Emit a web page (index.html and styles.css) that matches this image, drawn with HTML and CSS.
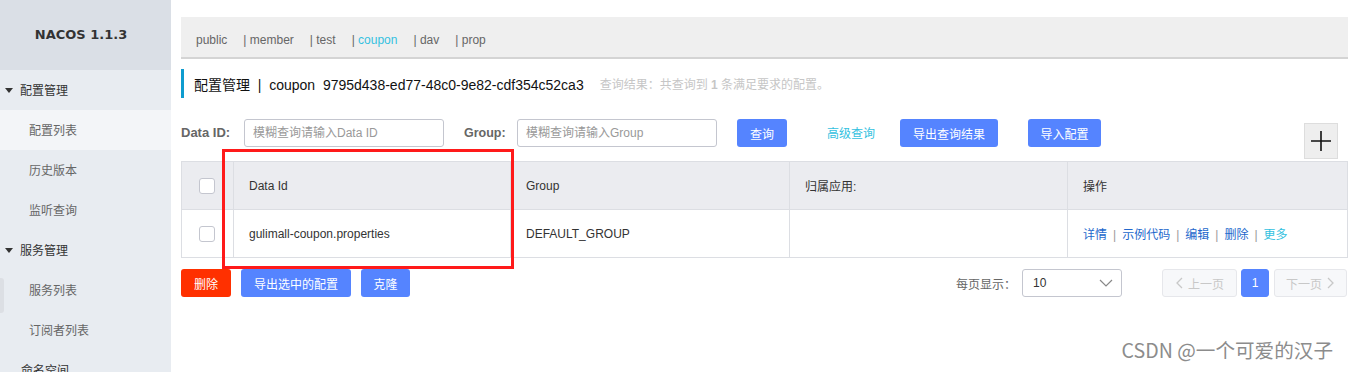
FILE: index.html
```html
<!DOCTYPE html>
<html>
<head>
<link rel="stylesheet" href="styles.css">
</head>
<body>
  <div class="app">
    <aside class="sidebar">
      <div class="logo">NACOS 1.1.3</div>
      <ul class="menu">
        <li class="menu-group"><span class="caret"></span>配置管理</li>
        <li class="menu-item active">配置列表</li>
        <li class="menu-item">历史版本</li>
        <li class="menu-item">监听查询</li>
        <li class="menu-group"><span class="caret"></span>服务管理</li>
        <li class="menu-item">服务列表</li>
        <li class="menu-item">订阅者列表</li>
        <li class="menu-group plain">命名空间</li>
      </ul>
      <span class="handle"></span>
    </aside>

    <main class="main">
      <div class="ns-bar">
        <span class="ns">public</span>
        <span class="ns">| member</span>
        <span class="ns">| test</span>
        <span class="ns">| <em>coupon</em></span>
        <span class="ns">| dav</span>
        <span class="ns">| prop</span>
      </div>

      <div class="page-title">
        <span class="title-text">配置管理 &nbsp;|&nbsp; coupon &nbsp;9795d438-ed77-48c0-9e82-cdf354c52ca3</span>
        <span class="result">查询结果：共查询到 <b>1</b> 条满足要求的配置。</span>
      </div>

      <div class="search">
        <label class="field-label id-label">Data ID:</label>
        <input class="field" type="text" placeholder="模糊查询请输入Data ID">
        <label class="field-label group-label">Group:</label>
        <input class="field" type="text" placeholder="模糊查询请输入Group">
        <button class="btn btn-query">查询</button>
        <a class="link-adv">高级查询</a>
        <button class="btn btn-export">导出查询结果</button>
        <button class="btn btn-import">导入配置</button>
        <button class="btn-add">
          <svg width="22" height="22" viewBox="0 0 22 22"><path d="M11 1v20M1 11h20" stroke="#111" stroke-width="1.6" fill="none"/></svg>
        </button>
      </div>

      <table class="grid">
        <colgroup>
          <col style="width:52px"><col style="width:277px"><col style="width:279px"><col style="width:278px"><col style="width:280px">
        </colgroup>
        <thead>
          <tr>
            <th class="check-cell"><span class="checkbox"></span></th>
            <th>Data Id</th>
            <th>Group</th>
            <th>归属应用:</th>
            <th>操作</th>
          </tr>
        </thead>
        <tbody>
          <tr>
            <td class="check-cell"><span class="checkbox"></span></td>
            <td>gulimall-coupon.properties</td>
            <td>DEFAULT_GROUP</td>
            <td></td>
            <td class="ops">
              <a>详情</a><i>|</i><a>示例代码</a><i>|</i><a>编辑</a><i>|</i><a>删除</a><i>|</i><a class="more">更多</a>
            </td>
          </tr>
        </tbody>
      </table>

      <div class="footer-row">
        <button class="btn btn-danger">删除</button>
        <button class="btn btn-sel">导出选中的配置</button>
        <button class="btn btn-clone">克隆</button>
        <div class="pager">
          <span class="page-size-label">每页显示：</span>
          <div class="select">
            <span>10</span>
            <svg width="14" height="8" viewBox="0 0 14 8"><path d="M1 1l6 6 6-6" stroke="#888" stroke-width="1.2" fill="none"/></svg>
          </div>
          <button class="page-btn prev">
            <svg width="8" height="12" viewBox="0 0 8 12"><path d="M7 1L2 6l5 5" stroke="#c8c8c8" stroke-width="1.3" fill="none"/></svg>上一页
          </button>
          <button class="page-btn current">1</button>
          <button class="page-btn next">下一页
            <svg width="8" height="12" viewBox="0 0 8 12"><path d="M1 1l5 5-5 5" stroke="#c8c8c8" stroke-width="1.3" fill="none"/></svg>
          </button>
        </div>
      </div>

      <div class="mark"></div>
    </main>

    <div class="watermark">CSDN @一个可爱的汉子</div>
  </div>
</body>
</html>
```

FILE: styles.css
```css
* {
  box-sizing: border-box;
  margin: 0;
  padding: 0;
}
body {
  width: 1348px;
  height: 372px;
  overflow: hidden;
  background: #fff;
  font-family: "Liberation Sans", "Noto Sans CJK SC", sans-serif;
  font-size: 12px;
  color: #333;
}
.app {
  display: flex;
  height: 372px;
  position: relative;
}

/* 左侧菜单 */
.sidebar {
  width: 171px;
  flex-shrink: 0;
  background: #e8ecf1;
  position: relative;
}
.logo {
  height: 70px;
  line-height: 70px;
  text-align: center;
  padding-right: 9px;
  background: #dadfe6;
  font-family: "DejaVu Sans", sans-serif;
  font-size: 13px;
  font-weight: bold;
  color: #333;
}
.menu {
  list-style: none;
}
.menu li {
  height: 40px;
  line-height: 40px;
  font-family: "Noto Sans CJK SC", sans-serif;
}
.menu-group {
  display: flex;
  align-items: center;
  color: #333;
  padding-left: 5px;
}
.menu-group.plain {
  padding-left: 21px;
}
.caret {
  width: 0;
  height: 0;
  border-left: 4.5px solid transparent;
  border-right: 4.5px solid transparent;
  border-top: 5px solid #333;
  margin-right: 7px;
}
.menu-item {
  padding-left: 29px;
  color: #666;
}
.menu-item.active {
  background: #f3f5f8;
}
.handle {
  position: absolute;
  left: 0;
  top: 278px;
  width: 4px;
  height: 35px;
  background: #dcdfe4;
  border-radius: 0 3px 3px 0;
}

/* 主区域 */
.main {
  flex: 1;
  padding: 17px 1px 0 10px;
  position: relative;
}
.ns-bar {
  height: 42px;
  margin-right: -1px;
  background: #efefef;
  border-bottom: 2px solid #d4d4d4;
  display: flex;
  align-items: center;
  padding-left: 15px;
  padding-top: 6px;
  color: #666;
}
.ns {
  margin-right: 16px;
}
.ns em {
  font-style: normal;
  color: #33c1e0;
}
.page-title {
  margin-top: 10px;
  height: 29px;
  border-left: 3px solid #0e9ccf;
  display: flex;
  align-items: center;
  padding-left: 10px;
}
.title-text {
  font-size: 14px;
  color: #111;
}
.result {
  margin-left: 16px;
  color: #c6c6c6;
}
.result b {
  font-weight: bold;
}

/* 查询行 */
.search {
  margin-top: 21px;
  display: flex;
  align-items: flex-start;
  height: 42px;
}
.field-label {
  font-weight: bold;
  color: #666;
  line-height: 28px;
}
.id-label {
  font-size: 13px;
  width: 63px;
}
.group-label {
  font-size: 12.5px;
  margin-left: 20px;
  width: 53px;
}
.field {
  width: 200px;
  height: 28px;
  border: 1px solid #c4c6cf;
  border-radius: 3px;
  padding: 0 8px;
  font-family: "Liberation Sans", "Noto Sans CJK SC", sans-serif;
  font-size: 12px;
}
.field::placeholder {
  color: #999;
}
.btn {
  height: 28px;
  border: none;
  border-radius: 3px;
  background: #5584ff;
  color: #fff;
  font-family: "Noto Sans CJK SC", sans-serif;
  font-size: 12px;
  padding: 0 12px;
}
.btn-query {
  margin-left: 20px;
  width: 50px;
}
.link-adv {
  color: #33c1e0;
  line-height: 28px;
  margin: 0 25px 0 40px;
  font-family: "Noto Sans CJK SC", sans-serif;
}
.btn-export {
  width: 98px;
}
.btn-import {
  width: 73px;
  margin-left: 30px;
}
.btn-add {
  margin-left: auto;
  margin-right: 10px;
  margin-top: 4px;
  width: 34px;
  height: 36px;
  background: #eee;
  border: 1px solid #ddd;
  display: flex;
  align-items: center;
  justify-content: center;
}

/* 表格 */
.grid {
  width: 1166px;
  table-layout: fixed;
  border-collapse: collapse;
}
.grid th,
.grid td {
  border: 1px solid #dcdee3;
  height: 48px;
  padding: 0 15px;
  text-align: left;
  font-weight: normal;
  color: #333;
}
.grid th {
  background: #ebecf0;
}
.grid .check-cell {
  padding: 0 0 0 17px;
}
.checkbox {
  display: block;
  width: 16px;
  height: 16px;
  border: 1px solid #c4c6cf;
  border-radius: 3px;
  background: #fff;
}
.ops a {
  color: #2368cc;
  font-family: "Noto Sans CJK SC", sans-serif;
}
.ops a.more {
  color: #33c1e0;
}
.ops i {
  font-style: normal;
  color: #999;
  margin: 0 6px;
}

/* 底部操作和分页 */
.footer-row {
  margin-top: 11px;
  display: flex;
  align-items: center;
  height: 28px;
}
.footer-row .btn {
  margin-right: 10px;
}
.btn-danger {
  background: #ff3000;
  width: 50px;
}
.btn-sel {
  width: 110px;
}
.btn-clone {
  width: 49px;
}
.pager {
  margin-left: auto;
  margin-right: 1px;
  display: flex;
  align-items: center;
}
.page-size-label {
  color: #666;
  margin-right: 6px;
  font-family: "Noto Sans CJK SC", sans-serif;
}
.select {
  width: 100px;
  height: 28px;
  border: 1px solid #c4c6cf;
  border-radius: 3px;
  display: flex;
  align-items: center;
  justify-content: space-between;
  padding: 0 8px 0 10px;
  color: #333;
  margin-right: 40px;
}
.page-btn {
  height: 28px;
  border: 1px solid #e6e7eb;
  border-radius: 3px;
  background: #f7f8fa;
  color: #c8c8c8;
  font-family: "Noto Sans CJK SC", sans-serif;
  font-size: 12px;
  display: flex;
  align-items: center;
  justify-content: center;
  gap: 5px;
}
.page-btn.prev {
  width: 75px;
}
.page-btn.current {
  width: 28px;
  margin: 0 5px 0 4px;
  background: #5584ff;
  border-color: #5584ff;
  color: #fff;
  font-family: "Liberation Sans", sans-serif;
}
.page-btn.next {
  width: 73px;
}

/* 截图上的红框标注 */
.mark {
  position: absolute;
  left: 51px;
  top: 149px;
  width: 292px;
  height: 120px;
  border: 3px solid #ff1a1a;
}
.watermark {
  position: absolute;
  right: 15px;
  bottom: 8px;
  font-family: "Noto Sans CJK SC", sans-serif;
  font-size: 19.6px;
  color: #8c8c8c;
  text-shadow: 0 0 2px #fff;
}
```
